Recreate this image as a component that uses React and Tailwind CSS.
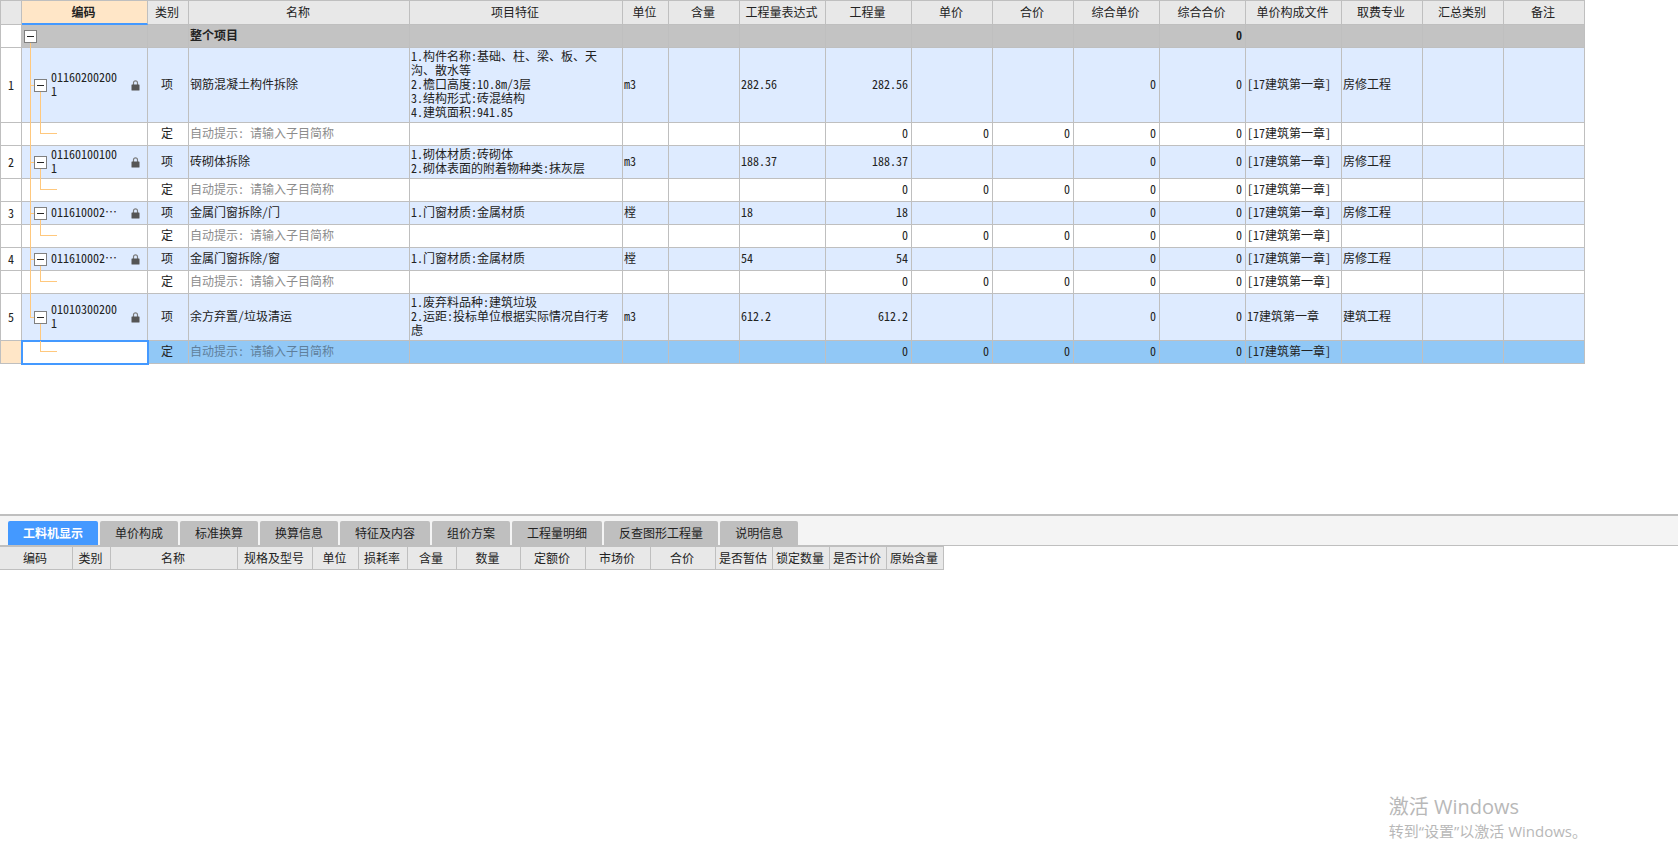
import { useState } from "react";

const FILE = "[17建筑第一章]";

const columns = [
  { key: "code", label: "编码", width: "w-[126px]" },
  { key: "type", label: "类别", width: "w-[41px]", align: "text-center" },
  { key: "name", label: "名称", width: "w-[221px]" },
  { key: "feature", label: "项目特征", width: "w-[213px]" },
  { key: "unit", label: "单位", width: "w-[46px]" },
  { key: "content", label: "含量", width: "w-[71px]" },
  { key: "expr", label: "工程量表达式", width: "w-[86px]" },
  { key: "qty", label: "工程量", width: "w-[86px]", align: "text-right" },
  { key: "price", label: "单价", width: "w-[81px]", align: "text-right" },
  { key: "total", label: "合价", width: "w-[81px]", align: "text-right" },
  { key: "fullPrice", label: "综合单价", width: "w-[86px]", align: "text-right" },
  { key: "fullTotal", label: "综合合价", width: "w-[86px]", align: "text-right" },
  { key: "file", label: "单价构成文件", width: "w-[96px]" },
  { key: "major", label: "取费专业", width: "w-[81px]" },
  { key: "summary", label: "汇总类别", width: "w-[81px]" },
  { key: "remark", label: "备注", width: "w-[81px]" },
];

const items = [
  {
    code: "01160200200 1",
    name: "钢筋混凝土构件拆除",
    feature: [
      "1.构件名称:基础、柱、梁、板、天沟、散水等",
      "2.檐口高度:10.8m/3层",
      "3.结构形式:砖混结构",
      "4.建筑面积:941.85",
    ],
    unit: "m3",
    qty: "282.56",
    file: FILE,
    major: "房修工程",
  },
  {
    code: "01160100100 1",
    name: "砖砌体拆除",
    feature: ["1.砌体材质:砖砌体", "2.砌体表面的附着物种类:抹灰层"],
    unit: "m3",
    qty: "188.37",
    file: FILE,
    major: "房修工程",
  },
  {
    code: "011610002…",
    name: "金属门窗拆除/门",
    feature: ["1.门窗材质:金属材质"],
    unit: "樘",
    qty: "18",
    file: FILE,
    major: "房修工程",
  },
  {
    code: "011610002…",
    name: "金属门窗拆除/窗",
    feature: ["1.门窗材质:金属材质"],
    unit: "樘",
    qty: "54",
    file: FILE,
    major: "房修工程",
  },
  {
    code: "01010300200 1",
    name: "余方弃置/垃圾清运",
    feature: ["1.废弃料品种:建筑垃圾", "2.运距:投标单位根据实际情况自行考虑"],
    unit: "m3",
    qty: "612.2",
    file: "17建筑第一章",
    major: "建筑工程",
  },
];

const tabs = [
  "工料机显示",
  "单价构成",
  "标准换算",
  "换算信息",
  "特征及内容",
  "组价方案",
  "工程量明细",
  "反查图形工程量",
  "说明信息",
];

const detailColumns = [
  { label: "编码", width: "w-[73px]" },
  { label: "类别", width: "w-[38px]" },
  { label: "名称", width: "w-[127px]" },
  { label: "规格及型号", width: "w-[75px]" },
  { label: "单位", width: "w-[46px]" },
  { label: "损耗率", width: "w-[49px]" },
  { label: "含量", width: "w-[49px]" },
  { label: "数量", width: "w-[64px]" },
  { label: "定额价", width: "w-[65px]" },
  { label: "市场价", width: "w-[65px]" },
  { label: "合价", width: "w-[65px]" },
  { label: "是否暂估", width: "w-[57px]" },
  { label: "锁定数量", width: "w-[57px]" },
  { label: "是否计价", width: "w-[57px]" },
  { label: "原始含量", width: "w-[57px]" },
];

const cell = "border-r border-b border-[#bfbfbf]";
const textCell = `${cell} pt-px pr-[3px] pb-[3px] pl-px`;

function Toggle({ label }) {
  return (
    <button
      aria-label={label}
      className="relative z-10 flex size-[13px] shrink-0 items-center justify-center border border-[#808080] bg-white"
    >
      <span className="h-px w-[7px] bg-[#262626]" />
    </button>
  );
}

function Lock() {
  return (
    <svg viewBox="0 0 9 11" className="h-[11px] w-[9px] shrink-0" aria-hidden="true">
      <path d="M2.5 5V2.8a2 2 0 0 1 4 0V5" fill="none" stroke="#7a7a7a" strokeWidth="1.2" />
      <rect x="0.5" y="4.5" width="8" height="6" rx="0.5" fill="#555" />
    </svg>
  );
}

function ItemRow({ item, index, last }) {
  const values = {
    ...item,
    type: "项",
    expr: item.qty,
    fullPrice: "0",
    fullTotal: "0",
    feature: item.feature.map((line) => <div key={line}>{line}</div>),
  };

  return (
    <tr className="h-[23px] bg-[#deebff]">
      <th scope="row" className={`${cell} bg-white font-normal`}>
        {index + 1}
      </th>
      <td className={`${cell} relative`}>
        {/* Tree lines */}
        <span
          className={`absolute top-0 left-2 w-px bg-[#ffc87d] ${last ? "bottom-1/2" : "-bottom-px"}`}
        />
        <span className="absolute top-1/2 left-2 h-px w-1 bg-[#ffc87d]" />
        <span className="absolute top-1/2 -bottom-px left-[18px] w-px bg-[#ffc87d]" />
        <div className="flex items-center pr-[7px] pl-3">
          <Toggle label={`收起 ${item.name}`} />
          <span className="ml-1 w-[68px] pb-[2px]">{item.code}</span>
          <span className="ml-auto">
            <Lock />
          </span>
        </div>
      </td>
      {columns.slice(1).map((col) => (
        <td key={col.key} className={`${textCell} ${col.align ?? ""}`}>
          {values[col.key]}
        </td>
      ))}
    </tr>
  );
}

function HintRow({ selected }) {
  const values = {
    type: "定",
    name: <span className={selected ? "text-[#5f7f9b]" : "text-[#8c8c8c]"}>自动提示: 请输入子目简称</span>,
    qty: "0",
    price: "0",
    total: "0",
    fullPrice: "0",
    fullTotal: "0",
    file: FILE,
  };

  return (
    <tr className={`h-[23px] ${selected ? "bg-[#91c8f6]" : "bg-white"}`}>
      <th className={`${cell} ${selected ? "bg-[#ffe6c7]" : ""}`} />
      <td
        className={`${cell} relative ${
          selected ? "bg-white outline-2 -outline-offset-1 outline-[#4499ff]" : ""
        }`}
      >
        {!selected && <span className="absolute top-0 -bottom-px left-2 w-px bg-[#ffc87d]" />}
        <span className="absolute top-0 bottom-1/2 left-[18px] w-[17px] border-b border-l border-[#ffc87d]" />
      </td>
      {columns.slice(1).map((col) => (
        <td key={col.key} className={`${textCell} ${col.align ?? ""}`}>
          {values[col.key]}
        </td>
      ))}
    </tr>
  );
}

function BillTable() {
  return (
    <table className="w-[1585px] table-fixed border-separate border-spacing-0 border-t border-l border-[#bfbfbf] leading-[14px]">
      <thead>
        <tr className="h-6 bg-[#e8e8e8]">
          <th className={`${cell} w-[21px]`} />
          {columns.map((col, i) => (
            <th
              key={col.key}
              className={`${col.width} border-r pr-[2px] whitespace-nowrap ${
                i === 0
                  ? "border-b-2 border-r-[#bfbfbf] border-b-[#4499ff] bg-[#ffe6c7] font-bold"
                  : "border-b border-[#bfbfbf] pb-[2px] font-normal"
              }`}
            >
              {col.label}
            </th>
          ))}
        </tr>
      </thead>
      <tbody>
        <tr className="h-[23px] bg-[#c3c3c3] font-bold">
          <th className={`${cell} bg-white`} />
          <td className={`${cell} relative pl-[2px]`}>
            <span className="absolute top-1/2 -bottom-px left-2 w-px bg-[#ffc87d]" />
            <Toggle label="收起 整个项目" />
          </td>
          {columns.slice(1).map((col) => (
            <td key={col.key} className={`${textCell} ${col.align ?? ""}`}>
              {col.key === "name" && "整个项目"}
              {col.key === "fullTotal" && "0"}
            </td>
          ))}
        </tr>
        {items.map((item, i) => {
          const last = i === items.length - 1;
          return [
            <ItemRow key={`item-${i}`} item={item} index={i} last={last} />,
            <HintRow key={`hint-${i}`} selected={last} />,
          ];
        })}
      </tbody>
    </table>
  );
}

export default function App() {
  const [activeTab, setActiveTab] = useState(tabs[0]);

  return (
    <div className="relative flex h-screen flex-col overflow-hidden bg-white font-['Noto_Sans_Mono_CJK_SC','Noto_Sans_CJK_SC',sans-serif] text-xs text-[#222]">
      <main className="min-h-0 flex-1 overflow-auto">
        <BillTable />
      </main>

      {/* Detail panel */}
      <section className="h-[345px] border-t-2 border-[#bfbfbf]">
        <div
          role="tablist"
          className="flex gap-[2px] border-b border-[#bfbfbf] bg-[#f4f4f4] px-2 pt-[5px]"
        >
          {tabs.map((tab) => (
            <button
              key={tab}
              role="tab"
              aria-selected={tab === activeTab}
              onClick={() => setActiveTab(tab)}
              className={`h-6 rounded-t-xs px-[15px] whitespace-nowrap ${
                tab === activeTab ? "bg-[#4499ff] font-bold text-white" : "bg-[#bfbfbf]"
              }`}
            >
              {tab}
            </button>
          ))}
        </div>
        <div className="overflow-x-auto">
          <table className="w-[944px] table-fixed border-separate border-spacing-0 border-t border-[#bfbfbf] leading-[14px]">
            <thead>
              <tr className="h-[23px] bg-[#e8e8e8]">
                {detailColumns.map((col) => (
                  <th
                    key={col.label}
                    className={`${cell} ${col.width} pr-[2px] font-normal whitespace-nowrap`}
                  >
                    {col.label}
                  </th>
                ))}
              </tr>
            </thead>
          </table>
        </div>
      </section>

      {/* Activation notice */}
      <div className="pointer-events-none absolute right-[91px] bottom-4 font-['Open_Sans','Noto_Sans_CJK_SC',sans-serif] text-[#b8b8b8]">
        <p className="text-xl leading-6">激活 Windows</p>
        <p className="text-[15px] leading-6">转到“设置”以激活 Windows。</p>
      </div>
    </div>
  );
}
